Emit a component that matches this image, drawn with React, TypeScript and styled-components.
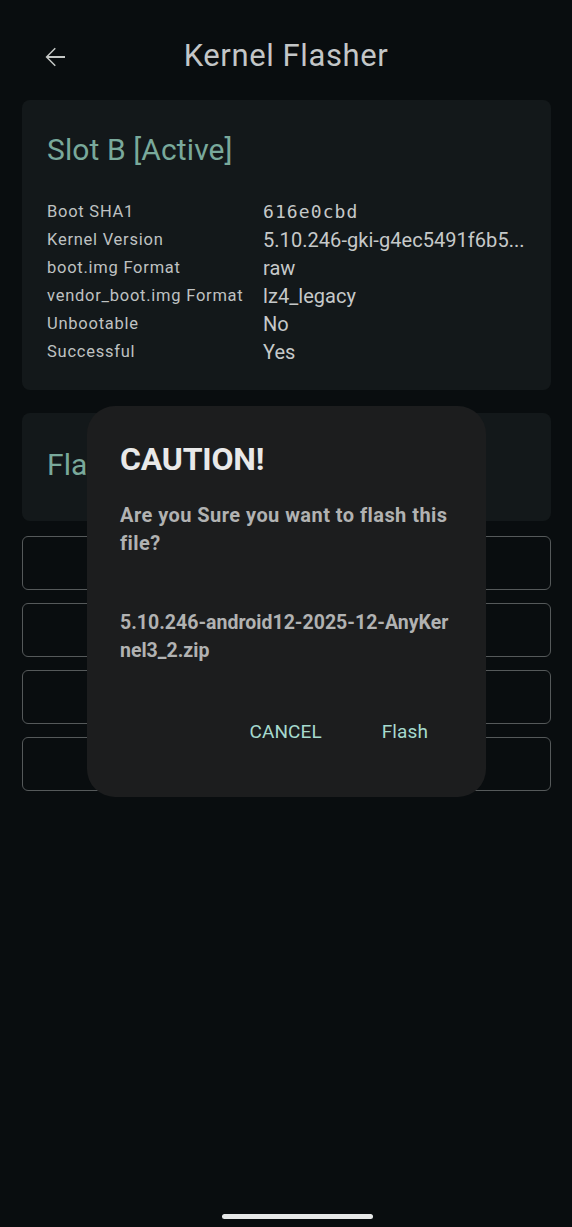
import React from 'react';
import styled, { createGlobalStyle } from 'styled-components';

const GlobalStyle = createGlobalStyle`
  html, body {
    margin: 0;
    padding: 0;
    background: #090d0f;
  }
  body {
    font-family: Roboto, "Noto Sans", sans-serif;
    color: #c4c7c5;
  }
`;

const Screen = styled.div`
  position: relative;
  width: 572px;
  min-height: 1227px;
  display: flex;
  flex-direction: column;
  box-sizing: border-box;
  background: #090d0f;
  overflow: hidden;
`;

const TopBar = styled.div`
  height: 100px;
  display: flex;
  align-items: center;
  padding-left: 39px;
  box-sizing: border-box;
`;

const BackButton = styled.div`
  width: 32px;
  height: 32px;
  display: flex;
  margin-top: 14px;
`;

const Title = styled.div`
  flex: 1;
  text-align: center;
  font-size: 31px;
  color: #c3c6c7;
  margin-left: -71px;
  margin-top: 10px;
  letter-spacing: 0.6px;
`;

const Content = styled.div`
  display: flex;
  flex-direction: column;
  padding: 0 21px 0 22px;
`;

const Card = styled.div<{ $compact?: boolean }>`
  background: #13181a;
  border-radius: 8px;
  padding: ${({ $compact }) => ($compact ? '32px 25px 36px' : '30px 25px 24px')};
  margin-bottom: ${({ $compact }) => ($compact ? '15px' : '23px')};
`;

const CardTitle = styled.div`
  font-size: 30px;
  line-height: 40px;
  color: #79a99b;
  letter-spacing: 0.1px;
`;

const InfoGrid = styled.div`
  margin-top: 28px;
  display: grid;
  grid-template-columns: 216px 1fr;
`;

const Label = styled.div`
  font-size: 16.5px;
  line-height: 28px;
  color: #bfc2c2;
  letter-spacing: 0.75px;
  white-space: nowrap;
`;

const Value = styled.div<{ $mono?: boolean }>`
  font-size: ${({ $mono }) => ($mono ? '18px' : '20px')};
  line-height: 28px;
  color: #c6c9c9;
  white-space: nowrap;
  font-family: ${({ $mono }) => ($mono ? '"DejaVu Sans Mono", monospace' : 'Roboto, sans-serif')};
  letter-spacing: ${({ $mono }) => ($mono ? '1.1px' : '0.05px')};
`;

const ActionList = styled.div`
  display: flex;
  flex-direction: column;
  gap: 13px;
`;

const OutlineButton = styled.div`
  height: 54px;
  box-sizing: border-box;
  border: 1.5px solid #55595a;
  border-radius: 6px;
`;

const Spacer = styled.div`
  flex: 1;
`;

const HomeIndicator = styled.div`
  align-self: flex-start;
  margin-left: 222px;
  width: 151px;
  height: 5px;
  border-radius: 3px;
  background: #e6e8e8;
  margin-bottom: 8px;
`;

const Dialog = styled.div`
  position: absolute;
  left: 87px;
  top: 406px;
  width: 399px;
  height: 391px;
  box-sizing: border-box;
  background: #1c1d1e;
  border-radius: 28px;
  padding: 33px 34px 0 33px;
  display: flex;
  flex-direction: column;
`;

const DialogTitle = styled.div`
  font-size: 32px;
  line-height: 40px;
  font-weight: 700;
  color: #e9e9e9;
  letter-spacing: -0.2px;
`;

const DialogText = styled.div<{ $gap: number; $breakAll?: boolean }>`
  margin-top: ${({ $gap }) => $gap}px;
  font-size: ${({ $breakAll }) => ($breakAll ? '19.5px' : '20px')};
  line-height: 27.5px;
  font-weight: 700;
  color: #b1b2b2;
  letter-spacing: ${({ $breakAll }) => ($breakAll ? '0' : '0.45px')};
  word-break: ${({ $breakAll }) => ($breakAll ? 'break-all' : 'normal')};
`;

const DialogActions = styled.div`
  margin-top: auto;
  margin-bottom: 54px;
  display: flex;
  justify-content: flex-end;
  gap: 36px;
  padding-right: 12px;
`;

const TextButton = styled.div`
  font-size: 19px;
  color: #a6dace;
  letter-spacing: 0.1px;
  padding: 0 12px;
`;

const ArrowBack = () => (
  <svg width="32" height="32" viewBox="0 0 24 24">
    <path
      d="M19.5 11.3H7.2l5.4-5.4-0.8-0.8L4.9 12l6.9 6.9 0.8-0.8-5.4-5.4h12.3v-1.4z"
      fill="#c4c7c5"
    />
  </svg>
);

const slotInfo = [
  { label: 'Boot SHA1', value: '616e0cbd', mono: true },
  { label: 'Kernel Version', value: '5.10.246-gki-g4ec5491f6b5...' },
  { label: 'boot.img Format', value: 'raw' },
  { label: 'vendor_boot.img Format', value: 'lz4_legacy' },
  { label: 'Unbootable', value: 'No' },
  { label: 'Successful', value: 'Yes' },
];

const App: React.FC = () => {
  return (
    <Screen>
      <GlobalStyle />
      <TopBar>
        <BackButton>
          <ArrowBack />
        </BackButton>
        <Title>Kernel Flasher</Title>
      </TopBar>
      <Content>
        <Card>
          <CardTitle>Slot B [Active]</CardTitle>
          <InfoGrid>
            {slotInfo.map((row) => (
              <React.Fragment key={row.label}>
                <Label>{row.label}</Label>
                <Value $mono={row.mono}>{row.value}</Value>
              </React.Fragment>
            ))}
          </InfoGrid>
        </Card>
        <Card $compact>
          <CardTitle>Flash</CardTitle>
        </Card>
        <ActionList>
          <OutlineButton />
          <OutlineButton />
          <OutlineButton />
          <OutlineButton />
        </ActionList>
      </Content>
      <Spacer />
      <HomeIndicator />
      <Dialog>
        <DialogTitle>CAUTION!</DialogTitle>
        <DialogText $gap={23}>Are you Sure you want to flash this file?</DialogText>
        <DialogText $gap={52} $breakAll>
          5.10.246-android12-2025-12-AnyKernel3_2.zip
        </DialogText>
        <DialogActions>
          <TextButton>CANCEL</TextButton>
          <TextButton>Flash</TextButton>
        </DialogActions>
      </Dialog>
    </Screen>
  );
};

export default App;
